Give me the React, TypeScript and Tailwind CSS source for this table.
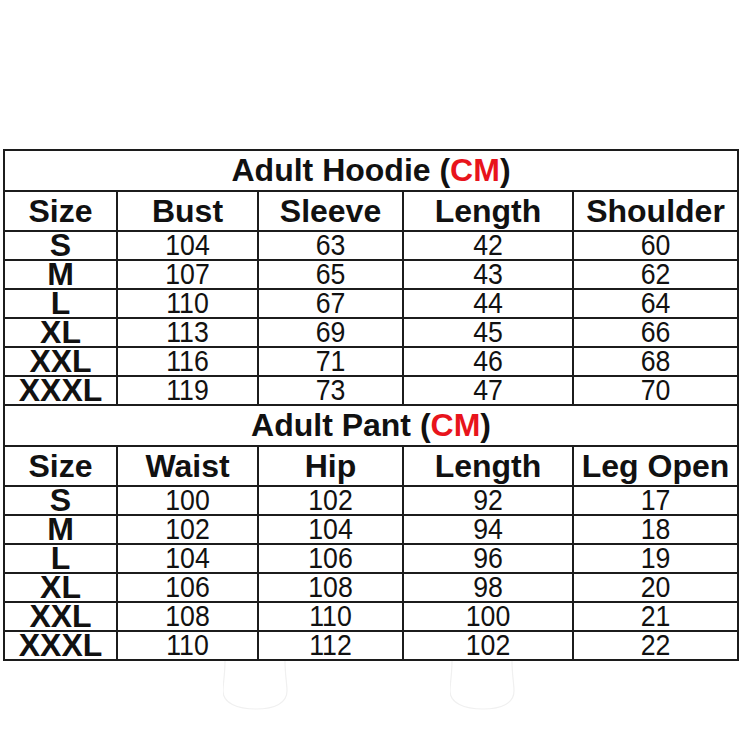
const hoodie = {
  title: 'Adult Hoodie',
  head: ['Size', 'Bust', 'Sleeve', 'Length', 'Shoulder'],
  rows: [
    ['S', '104', '63', '42', '60'],
    ['M', '107', '65', '43', '62'],
    ['L', '110', '67', '44', '64'],
    ['XL', '113', '69', '45', '66'],
    ['XXL', '116', '71', '46', '68'],
    ['XXXL', '119', '73', '47', '70'],
  ],
};

const pant = {
  title: 'Adult Pant',
  head: ['Size', 'Waist', 'Hip', 'Length', 'Leg Open'],
  rows: [
    ['S', '100', '102', '92', '17'],
    ['M', '102', '104', '94', '18'],
    ['L', '104', '106', '96', '19'],
    ['XL', '106', '108', '98', '20'],
    ['XXL', '108', '110', '100', '21'],
    ['XXXL', '110', '112', '102', '22'],
  ],
};

type Section = typeof hoodie;

const cell = 'border-2 border-[#1c1c1c] p-0 text-center align-middle';

const SectionRows = ({ data }: { data: Section }) => (
  <>
    <tr>
      <td colSpan={5} className={cell}>
        <div className="h-[39px] flex items-center justify-center text-[32px] font-bold leading-[39px]">
          <span>
            {data.title} (<span className="text-[#e8141c]">CM</span>)
          </span>
        </div>
      </td>
    </tr>
    <tr>
      {data.head.map((h) => (
        <td key={h} className={cell}>
          <div className="h-[38px] flex items-center justify-center text-[32px] font-bold leading-[38px] whitespace-nowrap">
            {h}
          </div>
        </td>
      ))}
    </tr>
    {data.rows.map((r) => (
      <tr key={r[0]}>
        {r.map((v, i) => (
          <td key={i} className={cell}>
            <div
              className={`h-[27px] flex items-center justify-center leading-[27px] ${
                i === 0 ? 'text-[32px] font-bold' : 'text-[29px] scale-x-[0.92]'
              }`}
            >
              {v}
            </div>
          </td>
        ))}
      </tr>
    ))}
  </>
);

const Leg = () => (
  <svg width="66" height="50" viewBox="0 0 66 50" fill="none">
    <path
      d="M2 0 C2 14 0 22 0 30 C0 42 14 48 33 48 C52 48 64 42 64 30 C64 22 62 14 62 0"
      stroke="#f0f0f0"
      strokeWidth="1.2"
    />
  </svg>
);

export default function App() {
  return (
    <div
      className="w-[740px] h-[740px] bg-white text-[#111] overflow-hidden"
      style={{ fontFamily: '"Liberation Sans", Arial, sans-serif' }}
    >
      <div className="pt-[149px] pl-[3px]">
        <table className="w-[734px] table-fixed border-collapse">
          <colgroup>
            <col className="w-[113px]" />
            <col className="w-[141px]" />
            <col className="w-[145px]" />
            <col className="w-[170px]" />
            <col className="w-[165px]" />
          </colgroup>
          <tbody>
            <SectionRows data={hoodie} />
            <SectionRows data={pant} />
          </tbody>
        </table>
      </div>
      <div className="flex pl-[223px] gap-[161px]">
        <Leg />
        <Leg />
      </div>
    </div>
  );
}
